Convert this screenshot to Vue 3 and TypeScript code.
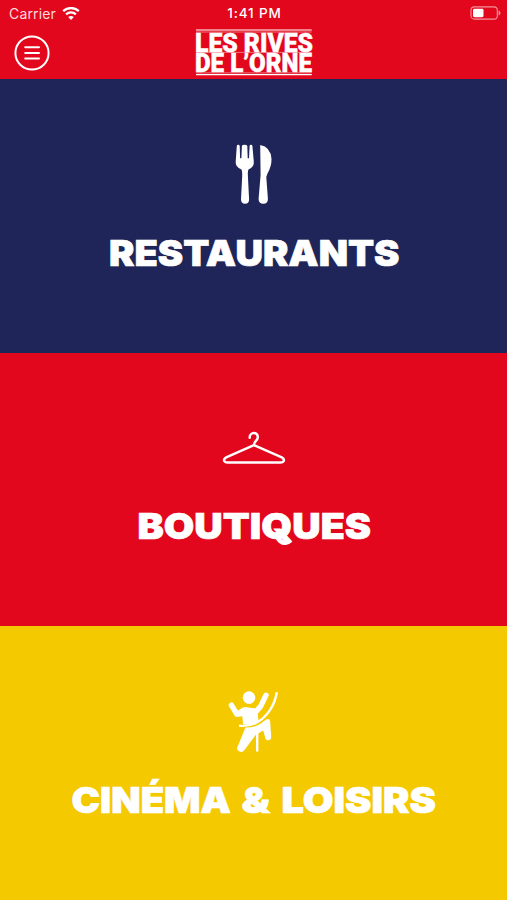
<script setup lang="ts">
interface Word {
  text: string
  x: number
  width: number
}

interface Section {
  id: 'food' | 'shops' | 'leisure'
  words: Word[]
}

const sections: Section[] = [
  { id: 'food', words: [{ text: 'RESTAURANTS', x: 109, width: 290.5 }] },
  { id: 'shops', words: [{ text: 'BOUTIQUES', x: 137.5, width: 233.5 }] },
  {
    id: 'leisure',
    words: [
      { text: 'CINÉMA', x: 71.5, width: 159.5 },
      { text: '&', x: 241.5, width: 28.5 },
      { text: 'LOISIRS', x: 281.5, width: 154.5 },
    ],
  },
]
</script>

<template>
  <div class="screen">
    <header class="header">
      <div class="status">
        <div class="network">
          <span class="carrier">Carrier</span>
          <svg class="wifi" width="18" height="14" viewBox="0 0 18 14">
            <path d="M1.2 4.1C5.6 0 12.4 0 16.8 4.1" />
            <path d="M4.1 7.3C6.9 4.7 11.1 4.7 13.9 7.3" />
            <path class="dot" d="M9 13 6.2 10.1Q9 7.7 11.8 10.1Z" />
          </svg>
        </div>
        <span class="time">1:41 PM</span>
        <svg class="battery" width="31" height="14" viewBox="0 0 31 14">
          <rect class="case" x="1" y="0.9" width="26.3" height="12.2" rx="3.4" />
          <rect class="charge" x="3" y="2.8" width="10.5" height="8.4" rx="1.4" />
          <path class="cap" d="M28.6 4.6Q30.5 5.4 30.5 7T28.6 9.4Z" />
        </svg>
      </div>
      <div class="bar">
        <button class="menu" aria-label="Menu">
          <svg width="36" height="36" viewBox="0 0 36 36">
            <circle cx="18" cy="18" r="16.6" />
            <path d="M11.2 12.2H25M11.2 17.9H25M11.2 23.4H25" />
          </svg>
        </button>
        <svg class="logo" width="120" height="50" viewBox="0 0 120 50">
          <path d="M2 2H117.7M2 46.6H117.7" />
          <path class="hairline" d="M2 4H117.7M2 24.4H117.7M2 44.9H117.7" />
          <text x="1" y="23.6" textLength="118" lengthAdjust="spacingAndGlyphs">LES RIVES</text>
          <text x="1" y="44.2" textLength="117" lengthAdjust="spacingAndGlyphs">DE L’ORNE</text>
        </svg>
      </div>
    </header>

    <main class="sections">
      <section v-for="s in sections" :key="s.id" class="panel" :class="s.id">
        <svg v-if="s.id === 'food'" class="icon" width="70" height="75" viewBox="0 0 70 75">
          <path
            d="M16.8 11Q16.9 9.7 18.2 9.7T19.7 11L20.1 23.2H21.4L21.9 11Q22 9.7 24.5 9.7T27.3 11L27.7 23.2H29L29.6 11Q29.7 9.7 31 9.7T32.4 11L33.8 26.8Q34.4 32.2 28.5 34.5Q27.6 36 27.9 41L29.1 64.3Q29.2 68.7 25.1 68.7T21 64.3L22.2 41Q22.4 36 21.4 34.5Q15.2 32 15.7 26.8Z"
          />
          <path
            d="M40.2 9.9Q50.8 11.8 51.5 24Q51.7 31 47.5 38.6Q45.9 41.5 46.5 45L47.9 63.7Q48 68.7 43.3 68.7T38.6 63.7L40.6 40Z"
          />
        </svg>
        <svg v-else-if="s.id === 'shops'" class="icon" width="90" height="55" viewBox="0 0 90 55">
          <path
            class="wire"
            d="M39.7 17.7C39.5 11.7 48 11.5 47.8 17.2C47.7 21 43.8 20.7 43.9 25.2L71.8 37.4Q74.8 39.2 73.5 41.4Q72.8 42.6 70.5 42.6H17.5Q15.2 42.6 14.5 41.4Q13.2 39.2 16.2 37.4L43.9 25.2"
          />
        </svg>
        <svg v-else class="icon" width="70" height="80" viewBox="0 0 70 80">
          <circle cx="29" cy="17.6" r="6.3" />
          <path class="limb" d="M11.4 25.2 16.8 34 23.5 33M46 15.2 40.6 26.4 33.5 34.5" />
          <path d="M15 32.5 22 28Q25 26.4 28.5 27.4L37 28.6 38 36 38.5 41.5Q32 45.4 23 44.2L22.3 36.2 16 36.6Z" />
          <path
            d="M25.4 47.6Q34.5 47.6 40.8 43.6L46 39.4Q50.1 37.6 50.2 42L51.2 57Q51 60.2 48.2 60.2T45.2 57.4L43.2 50.6 35.6 55 24.5 70Q22.2 73 19 71.2T17.7 66.6Z"
          />
          <path class="rope" d="M56.8 12.2C54.8 25.5 46.8 37.2 36.5 42.7Q28 46.8 19 45.6" />
          <path class="line" d="M37.2 52V71.5" />
        </svg>
        <svg class="label" width="507" height="48" viewBox="0 0 507 48">
          <text
            v-for="w in s.words"
            :key="w.text"
            :x="w.x"
            y="37"
            :textLength="w.width"
            lengthAdjust="spacingAndGlyphs"
          >{{ w.text }}</text>
          <path v-if="s.id === 'shops'" class="tail" d="M277.5 35.5Q280.5 41.3 285.5 40.8 288.5 40.4 290.8 38.2" />
        </svg>
      </section>
    </main>
  </div>
</template>

<style>
body {
  margin: 0;
}
</style>

<style scoped>
.screen {
  display: flex;
  flex-direction: column;
  width: 507px;
  height: 900px;
  overflow: hidden;
  background: #e2071c;
  color: #fff;
  font-family: Inter, 'Liberation Sans', sans-serif;
}

.header {
  flex: 0 0 79px;
}

.status {
  display: grid;
  grid-template-columns: 1fr auto 1fr;
  align-items: center;
  height: 27px;
  padding: 0 6px 0 9px;
  font-size: 13.5px;
  line-height: 27px;
}

.network {
  display: flex;
  align-items: center;
  gap: 6px;
}

.carrier {
  font-size: 14px;
  letter-spacing: 0.15px;
  color: #ffd9dd;
}

.wifi {
  fill: none;
  stroke: #fff;
  stroke-width: 2.3;
}

.wifi .dot {
  fill: #fff;
  stroke: none;
}

.time {
  font-weight: 500;
  letter-spacing: 0.9px;
  margin-right: 1px;
  color: #fff;
}

.battery {
  justify-self: end;
  margin-top: -1px;
}

.case {
  fill: none;
  stroke: #f4949c;
  stroke-width: 1.1;
}

.charge {
  fill: #fff;
}

.cap {
  fill: #f4949c;
}

.bar {
  display: grid;
  grid-template-columns: 1fr 120px 1fr;
  align-items: start;
}

.menu {
  margin: 8px 0 0 14px;
  padding: 0;
  width: 36px;
  height: 36px;
  border: 0;
  background: none;
}

.menu svg {
  display: block;
  fill: none;
  stroke: #fff;
  stroke-width: 2;
  stroke-linecap: round;
}

.logo {
  margin-top: 1px;
  overflow: visible;
  fill: #fff;
  font-family: Roboto, 'Liberation Sans', sans-serif;
  font-size: 26px;
  font-weight: 900;
}

.logo text {
  stroke: #fff;
  stroke-width: 0.5;
}

.logo path {
  stroke: #fff;
  stroke-width: 1.2;
}

.logo .hairline {
  stroke: #f6a5ab;
  stroke-width: 0.7;
}

.sections {
  flex: 1;
  display: grid;
  grid-template-rows: repeat(3, 1fr);
}

.panel {
  display: flex;
  flex-direction: column;
  align-items: center;
}

.food {
  background: #1f2558;
  padding-top: 56px;
}

.shops {
  background: #e2071c;
  padding-top: 67px;
}

.leisure {
  background: #f5c900;
  padding-top: 54px;
}

.icon {
  display: block;
  margin-left: 3px;
  fill: #fff;
}

.wire {
  fill: none;
  stroke: #fff;
  stroke-width: 2.5;
  stroke-linecap: round;
  stroke-linejoin: round;
}

.limb {
  fill: none;
  stroke: #fff;
  stroke-width: 5.4;
  stroke-linecap: round;
  stroke-linejoin: round;
}

.rope,
.line {
  fill: none;
  stroke: #fff;
  stroke-width: 2.4;
}

.label {
  display: block;
  fill: #fff;
  font-size: 36px;
  font-weight: 900;
}

.label text {
  stroke: #fff;
  stroke-width: 0.7;
}

.tail {
  fill: none;
  stroke: #fff;
  stroke-width: 4.5;
}

.food .label {
  margin-top: 19px;
}

.shops .label {
  margin-top: 27px;
}

.leisure .label {
  margin-top: 16px;
}
</style>
